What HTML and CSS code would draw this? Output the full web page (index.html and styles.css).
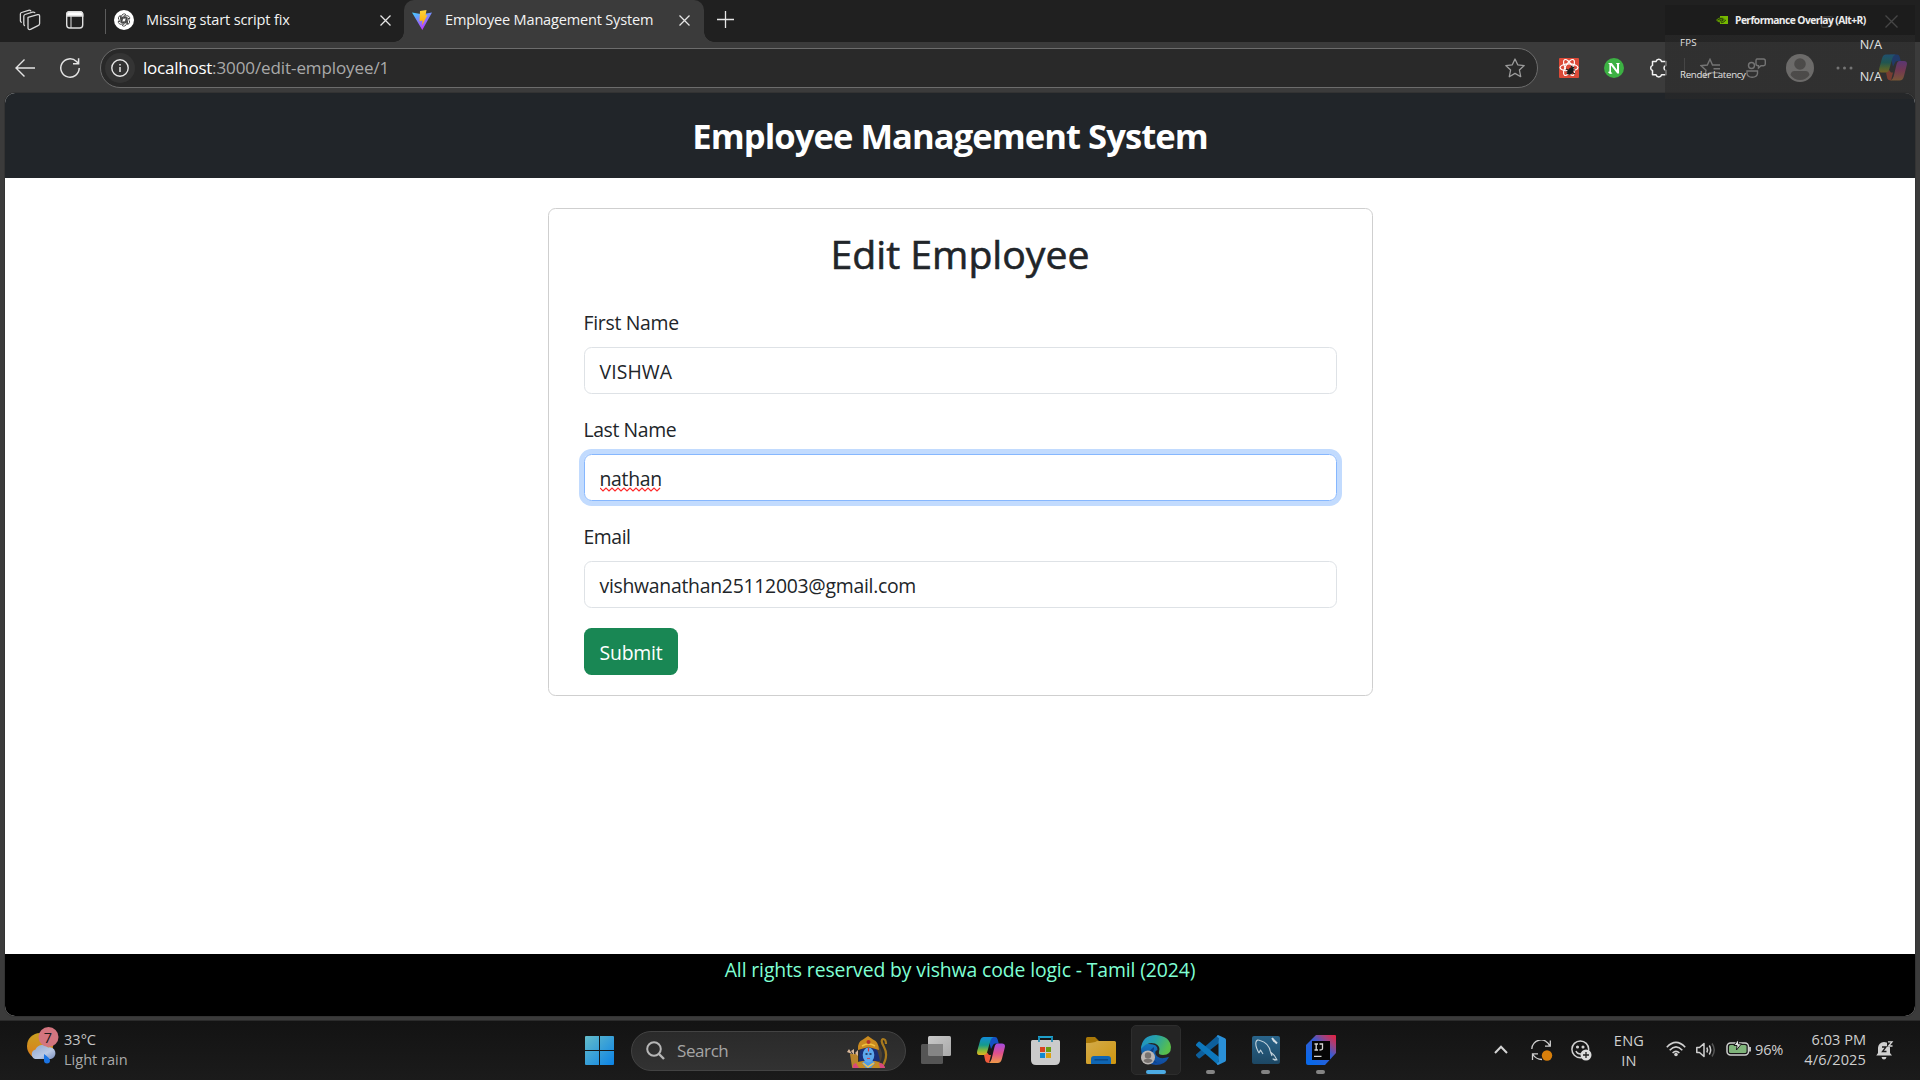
FILE: index.html
```html
<!DOCTYPE html>
<html lang="en">
<head>
<meta charset="utf-8">
<title>Employee Management System</title>
<link rel="stylesheet" href="styles.css">
</head>
<body>
<div class="screen">

  <div class="tabstrip">
    <svg class="ic workspaces" width="22" height="22" viewBox="0 0 22 22" fill="none" stroke="#d8d8d8" stroke-width="1.3" stroke-linejoin="round" stroke-linecap="round"><path d="M9 8.3 18.6 5.6Q20.6 5.200 20.600 7V14.500Q20.600 16 19 16.700L11.500 20.400Q9 21 9 18.800ZM5.500 16.500Q4.800 16 4.800 15V7.200Q4.800 6 6 5.500L13.500 3.200Q15 2.800 15.800 3.600M2.300 13.300Q1.400 12.800 1.400 11.700V5Q1.400 3.900 2.600 3.500L9.500 1.300Q11 .9 11.700 1.700"/></svg>
    <svg class="ic tabactions" width="20" height="20" viewBox="0 0 20 20" fill="none" stroke="#dedede" stroke-width="1.4"><rect x="1.700" y="1.700" width="16" height="16.300" rx="3"/><path d="M1.700 4.500Q1.700 1.700 4.500 1.700H15Q17.700 1.700 17.700 4.500V6H1.700Z" fill="#fff"/><path d="M6 6V18" stroke-width="1"/></svg>
    <div class="tab-divider"></div>
    <div class="tab tab-idle">
      <svg class="ic" width="20" height="20" viewBox="0 0 20 20"><circle cx="10" cy="10" r="10" fill="#fff"/><g fill="none" stroke="#333" stroke-width=".8"><g id="petals"><path d="M7.500 11.500V6.500A2.600 2.600 0 0 1 12 4.700L8.500 6.900V10"/><path d="M7.500 11.500V6.500A2.600 2.600 0 0 1 12 4.700L8.500 6.900V10" transform="rotate(60 10 10)"/><path d="M7.500 11.500V6.500A2.600 2.600 0 0 1 12 4.700L8.500 6.900V10" transform="rotate(120 10 10)"/></g><use href="#petals" transform="rotate(180 10 10)"/></g></svg>
      <span class="tab-title title-idle">Missing start script fix</span>
      <svg class="ic tab-close" width="11" height="11" viewBox="0 0 11 11" stroke="#e6e6e6" stroke-width="1.300"><path d="M.5.5 10.500 10.500M10.500.5.500 10.500"/></svg>
    </div>
    <div class="tab tab-active">
      <svg class="ic" width="20" height="20" viewBox="0 0 20 20"><defs><linearGradient id="va" x1="0" y1="0" x2="0.500" y2="1"><stop offset="0" stop-color="#41d1ff"/><stop offset="1" stop-color="#bd34fe"/></linearGradient><linearGradient id="vb" x1="0" y1="0" x2="0" y2="1"><stop offset="0" stop-color="#ffd43a"/><stop offset="1" stop-color="#ffa800"/></linearGradient></defs><path d="M0 2.500 10 4.200 20 2.500 10.300 20Z" fill="url(#va)"/><path d="M8 1 14.500 0 13.500 5.500 15.500 5 10 15.500 10.600 10.500 7.500 11.200Z" fill="url(#vb)"/></svg>
      <span class="tab-title title-active">Employee Management System</span>
      <svg class="ic tab-close" width="11" height="11" viewBox="0 0 11 11" stroke="#e6e6e6" stroke-width="1.300"><path d="M.5.5 10.500 10.500M10.500.5.500 10.500"/></svg>
    </div>
    <svg class="ic new-tab" width="17" height="17" viewBox="0 0 17 17" stroke="#e6e6e6" stroke-width="1.300"><path d="M0 8.500H17M8.500 0V17"/></svg>
    <div class="window-controls">
      <svg width="12" height="12" viewBox="0 0 12 12" fill="none" stroke="#bbb" stroke-width="1.200"><rect x=".6" y="2.600" width="8.800" height="8.800" rx="1.500"/><path d="M3 2V.6H10Q11.400.6 11.400 2V9"/></svg>
      <svg width="13" height="13" viewBox="0 0 13 13" stroke="#eee" stroke-width="1.300"><path d="M.5.5 12.500 12.500M12.500.5.5 12.500"/></svg>
    </div>
  </div>

  <div class="toolbar">
    <svg class="ic back" width="20" height="18" viewBox="0 0 20 18" fill="none" stroke="#e4e4e4" stroke-width="1.400"><path d="M20 9H1M9.500.5 1 9 9.500 17.500"/></svg>
    <svg class="ic reload" width="20" height="20" viewBox="0 0 20 20" fill="none" stroke="#e4e4e4" stroke-width="1.500"><path d="M19.200 10A9.200 9.200 0 1 1 16.500 3.500L18.500 5.500M18.600.3V5.800H13"/></svg>
    <div class="omnibox">
      <div class="site-info"><svg width="18" height="18" viewBox="0 0 18 18" fill="none" stroke="#e8e8e8" stroke-width="1.400"><circle cx="9" cy="9" r="8.200"/><path d="M9 8V13M9 5V6.600" stroke-width="1.500"/></svg></div>
      <span class="url"><span class="host">localhost</span>:3000/edit-employee/1</span>
      <svg class="star" width="20" height="20" viewBox="0 0 20 20" fill="none" stroke="#9b9b9b" stroke-width="1.300" stroke-linejoin="round"><path d="M10 1 12.700 6.800 19.200 7.600 14.400 12 15.700 18.700 10 15.400 4.300 18.700 5.600 12 .8 7.600 7.300 6.800Z"/></svg>
    </div>
    <div class="toolbar-icons">
      <svg class="ic i-react" width="20" height="20" viewBox="0 0 20 20"><rect width="20" height="20" rx="1" fill="#dc4a38"/><g fill="none" stroke="#fff" stroke-width="1.200"><ellipse cx="10" cy="9.500" rx="9" ry="3.600"/><ellipse cx="10" cy="9.500" rx="9" ry="3.600" transform="rotate(60 10 9.500)"/><ellipse cx="10" cy="9.500" rx="9" ry="3.600" transform="rotate(120 10 9.500)"/></g><ellipse cx="11.500" cy="13" rx="2.600" ry="4" fill="#1b1b1b" transform="rotate(30 11.500 13)"/><path d="M7 11 16 16M8 16 15 9M12 8 14.500 10M7.500 13.500 10 14M13 12 16 12" stroke="#1b1b1b" stroke-width="1.200"/></svg>
      <svg class="ic i-n" width="20" height="20" viewBox="0 0 20 20"><circle cx="10" cy="10" r="10" fill="#3cb143"/><path d="M4 5H7.800L13 12V6.200L11.800 5H16L15 6.200V15.500H13.300L7 7.500V14L8.500 15.500 6 16 3.800 14 5.400 13.500V6.200Z" fill="#fff"/></svg>
      <svg class="ic i-puzzle" width="20" height="20" viewBox="0 0 20 20" fill="none" stroke="#f2f2f2" stroke-width="1.500"><path d="M3.500 3.500H7A2.900 2.900 0 0 1 12.600 3.500H17V7.600A2.500 2.500 0 0 0 17 12.500V16.800H12.600A2.900 2.900 0 0 1 7 16.800H3.500V12.500A2.700 2.700 0 0 1 3.500 7.400Z" stroke-linejoin="round"/></svg>
      <div class="bar-divider"></div>
      <svg class="ic i-fav" width="21" height="20" viewBox="0 0 21 20" fill="none" stroke="#e4e4e4" stroke-width="1.400"><path d="M12.500 14.500 9.500 15 4.800 18.300 6 12.300 1 7.700 7.300 7 10 1.300 12.500 7H20M13.500 10.800H20M12.500 14.700H20" /></svg>
      <svg class="ic i-people" width="20" height="20" viewBox="0 0 20 20" fill="none" stroke="#e4e4e4" stroke-width="1.400"><circle cx="5.500" cy="7.500" r="3"/><path d="M1 13H11.500V15.500Q11 19.200 6.200 19.200 1.500 19.200 1 15.500ZM11 1H17.500Q19.300 1 19.300 3V6Q19.300 7.700 17.500 7.700H15L12.500 10V7.700Q10 7.700 10 6V3Q10 1 11 1Z"/></svg>
      <svg class="ic i-avatar" width="28" height="28" viewBox="0 0 28 28"><circle cx="14" cy="14" r="14" fill="#d0cdca"/><circle cx="14" cy="10" r="5.800" fill="#817d7a"/><path d="M4.500 21Q5 17 8.500 17H19.500Q23 17 23.500 21 20 26 14 26T4.500 21Z" fill="#817d7a"/></svg>
      <svg class="ic i-more" width="17" height="4" viewBox="0 0 17 4" fill="#e4e4e4"><circle cx="2" cy="2" r="1.500"/><circle cx="8.500" cy="2" r="1.500"/><circle cx="15" cy="2" r="1.500"/></svg>
      <svg class="ic i-copilot" width="28" height="27" viewBox="0 0 28 26"><use href="#copilot"/></svg>
    </div>
  </div>

  <div class="viewport">
    <header class="app-header"><h1>Employee Management System</h1></header>
    <main class="app-main">
      <section class="card">
        <h2>Edit Employee</h2>
        <form class="form">
          <div class="field">
            <label class="l-first">First Name</label>
            <div class="control v-first">VISHWA</div>
          </div>
          <div class="field">
            <label class="l-last">Last Name</label>
            <div class="control focused"><span class="misspelt">nathan<svg class="squiggle" width="61" height="5" viewBox="0 0 61 5" fill="none" stroke="#ff2a2a" stroke-width="1.200"><path d="M0 1 3 4 6 1 9 4 12 1 15 4 18 1 21 4 24 1 27 4 30 1 33 4 36 1 39 4 42 1 45 4 48 1 51 4 54 1 57 4 60 1"/></svg></span></div>
          </div>
          <div class="field">
            <label class="l-email">Email</label>
            <div class="control v-email">vishwanathan25112003@gmail.com</div>
          </div>
          <button type="button" class="submit">Submit</button>
        </form>
      </section>
    </main>
    <footer class="app-footer">All rights reserved by vishwa code logic - Tamil (2024)</footer>
  </div>

  <div class="taskbar">
    <div class="weather">
      <svg width="32" height="38" viewBox="0 0 32 38"><defs><linearGradient id="sun" x1="0" y1="0" x2="0" y2="1"><stop offset="0" stop-color="#c9a021"/><stop offset="1" stop-color="#dc7a1b"/></linearGradient><linearGradient id="cloud" x1="0" y1="0" x2="1" y2="1"><stop offset="0" stop-color="#8ea6cf"/><stop offset=".6" stop-color="#b9c8e4"/><stop offset="1" stop-color="#7b8fbd"/></linearGradient></defs><circle cx="13" cy="19" r="13" fill="url(#sun)"/><path d="M8 32A5 5 0 0 1 8.500 22.500 7.500 7.500 0 0 1 21 20.500 5.800 5.800 0 0 1 24 32Z" fill="url(#cloud)"/><path d="M17 27Q23 31 23 33.500A3 3 0 0 1 17 33.500Z" fill="#1b74e4"/><circle cx="21.500" cy="10" r="10" fill="#d3757f"/></svg>
      <span class="weather-badge">7</span>
      <div class="weather-text"><span class="temp">33°C</span><span class="cond">Light rain</span></div>
    </div>

    <div class="dock">
      <div class="slot"><svg width="29" height="29" viewBox="0 0 29 29"><defs><linearGradient id="win" x1="0" y1="0" x2="1" y2="1"><stop offset="0" stop-color="#64bcc9"/><stop offset="1" stop-color="#0b83e6"/></linearGradient></defs><path d="M1 0H14V14H0V1Q0 0 1 0ZM15 0H28Q29 0 29 1V14H15ZM0 15H14V29H1Q0 29 0 28ZM15 15H29V28Q29 29 28 29H15Z" fill="url(#win)"/></svg></div>
      <div class="search">
        <svg class="search-icon" width="19" height="19" viewBox="0 0 19 19" fill="none" stroke="#b6b6b6" stroke-width="2"><circle cx="8" cy="8" r="6.800"/><path d="M13 13 18 18" stroke-width="2.400"/></svg>
        <span class="search-text">Search</span>
        <svg class="deity" width="42" height="32" viewBox="0 0 42 32">
          <ellipse cx="25" cy="19" rx="11" ry="12" fill="#4d4133"/>
          <path d="M36 31Q43 20 38 11 34 4 37 3 40 3 40 8" fill="none" stroke="#a97a1d" stroke-width="2.200"/>
          <path d="M4 18 12 18 12 31 6 31Z" fill="#b8842c"/><path d="M1 16 3 13 6 18ZM5 15 8 13 8 19ZM9 17 12 14 12 20Z" fill="#d8b79a"/>
          <path d="M13 25Q13 14 16 12H30Q32 15 34 25Z" fill="#1a2e78"/>
          <path d="M6 32Q7 26 17 25L29 25Q38 27 39 32Z" fill="#c58b24"/>
          <path d="M7 32Q6 28 10 27L13 32ZM34 32 33 27Q38 27 39 32Z" fill="#d8487b"/>
          <path d="M16 27 20 24 26 24 29 27 25 32 20 32Z" fill="#4b9be6"/>
          <ellipse cx="22.500" cy="19" rx="5.800" ry="7.500" fill="#5ea8ee"/>
          <path d="M12 14Q11 6 17 3.500L22 0 27 3.500Q33 6 33 14L22.500 11Z" fill="#c98a20"/>
          <path d="M16 10Q22.500 6 29 10" fill="none" stroke="#f0c040" stroke-width="1.500"/><circle cx="22.500" cy="6" r="2" fill="#b4312c"/>
          <path d="M19.500 18H21.500M23.500 18H25.500" stroke="#14244c" stroke-width="1.300"/><path d="M22.500 12V15.500" stroke="#d6323e" stroke-width="1.200"/><path d="M21 22.500H24" stroke="#c8485c" stroke-width="1.200"/>
          <path d="M17 27 22 31 28 27" fill="none" stroke="#edbf55" stroke-width="1.600"/>
        </svg>
      </div>
      <div class="slot"><svg width="30" height="28" viewBox="0 0 30 28"><defs><linearGradient id="tv" x1="0" y1="0" x2="1" y2="1"><stop offset="0" stop-color="#c9c9c9"/><stop offset="1" stop-color="#a9a9a9"/></linearGradient></defs><rect x="7" y="0" width="23" height="20" rx="1.500" fill="url(#tv)"/><rect x="0" y="8" width="22" height="20" rx="1.500" fill="#555"/><path d="M7 8H22V20H8.500Q7 20 7 18.500Z" fill="#858585"/></svg></div>
      <div class="slot"><svg width="28" height="26" viewBox="0 0 28 26"><defs>
        <linearGradient id="cpa" x1="0" y1="0" x2="0" y2="1"><stop offset="0" stop-color="#128bd8"/><stop offset=".45" stop-color="#159a8c"/><stop offset=".75" stop-color="#86b83a"/><stop offset="1" stop-color="#e5b41e"/></linearGradient>
        <linearGradient id="cpb" x1="0" y1="0" x2="0" y2="1"><stop offset="0" stop-color="#a44be0"/><stop offset=".5" stop-color="#e0508c"/><stop offset="1" stop-color="#ef9a48"/></linearGradient>
        <g id="copilot"><path d="M11 0H18Q20 0 20.500 2L21.800 6.500H18.500Q16.500 6.500 15.800 8.500L14 12Z" fill="#1452c4"/><path d="M7 18Q9 17.500 9.700 15L12 18 14 18 12 26Q9 26 8.300 24Z" fill="#ef5a3c"/><path d="M7 0H16.500Q14 1 13.300 4L10.200 15Q9.400 18 7 18H3Q-.7 18 .2 14L3 4Q4 0 7 0Z" fill="url(#cpa)"/><path d="M20.500 6.500H25Q28.700 6.500 27.800 10.500L25 21.500Q24 26 20.500 26H11.500Q13.800 25 14.600 22L17.500 10Q18.300 6.500 20.500 6.500Z" fill="url(#cpb)"/></g></defs><use href="#copilot"/></svg></div>
      <div class="slot"><svg width="29" height="29" viewBox="0 0 29 29"><path d="M8 5V1H21V5" fill="none" stroke="#1e9fc9" stroke-width="2"/><path d="M0 5.500Q0 4 1.500 4H27.500Q29 4 29 5.500V24Q29 29 24 29H5Q0 29 0 24Z" fill="#cbcbcb"/><path d="M8 1V6M21 1V6" stroke="#1585b0" stroke-width="1.600"/><path d="M9 11H14V16H9Z" fill="#d9431f"/><path d="M15 11H20V16H15Z" fill="#6c9d12"/><path d="M9 17H14V22H9Z" fill="#1288cf"/><path d="M15 17H20V22H15Z" fill="#dca112"/></svg></div>
      <div class="slot"><svg width="30" height="27" viewBox="0 0 30 27"><defs><linearGradient id="fo" x1="0" y1="0" x2="1" y2="1"><stop offset="0" stop-color="#d3ab4b"/><stop offset="1" stop-color="#cf960f"/></linearGradient></defs><path d="M0 1.500Q0 0 1.500 0H9L13 4H20V10H0Z" fill="#a97808"/><path d="M0 6Q8 6 11 4H28.500Q30 4 30 5.500V26Q30 27 28.500 27H1.500Q0 27 0 25.500Z" fill="url(#fo)"/><path d="M5 27V22Q5 19 8 19H22Q25 19 25 22V27Z" fill="#0f66b4"/><path d="M8.500 22.800H22" stroke="#0a4580" stroke-width="1.300"/></svg></div>
      <div class="slot app active">
        <svg width="30" height="30" viewBox="0 0 30 30"><defs><linearGradient id="ea" x1="0" y1="0" x2="1" y2=".4"><stop offset="0" stop-color="#1f8fd0"/><stop offset=".5" stop-color="#27a3a6"/><stop offset="1" stop-color="#58bf4c"/></linearGradient><linearGradient id="eb" x1="0" y1="0" x2="0" y2="1"><stop offset="0" stop-color="#1478bd"/><stop offset="1" stop-color="#10489d"/></linearGradient></defs><path d="M0 14Q1 5 8 9 17 9 16.500 15 13 16 15 20 18 25 28 22 24 30 15 30 1 29 0 14Z" fill="url(#eb)"/><path d="M0 14Q1 0 15 0 29 1 30 12 30 20 22 20 17 20 18 17 20 11 14 8.500 6 6 0 14Z" fill="url(#ea)"/><path d="M13 14Q8 22 16 28 9 27 8 20 8 15 13 12Z" fill="#0c3f85"/><circle cx="7" cy="22.500" r="7" fill="#bbb7b4"/><circle cx="7" cy="20.500" r="3.200" fill="#77726f"/><path d="M2.500 26Q3 24 5 24H9Q11 24 11.500 26 9.500 28 7 28T2.500 26Z" fill="#77726f"/></svg>
        <i class="indicator"></i>
      </div>
      <div class="slot app"><svg width="30" height="30" viewBox="0 0 30 30"><path d="M0 19.500 22 0 23 8 3.500 23.500 2.500 23.200.3 21Q-.3 20.200 0 19.500Z" fill="#0d5f9c"/><path d="M0 10.500Q-.3 9.800.3 9L2.500 6.800 3.500 6.500 23 22 22 30Z" fill="#0d77bc"/><path d="M22 0 29 3.200Q30 3.700 30 5V25Q30 26.300 29 26.800L22 30Q20.800 29.500 20.800 28.500L22.500 27V3L20.800 1.500Q20.800.5 22 0Z" fill="#2a90d8"/></svg><i class="indicator"></i></div>
      <div class="slot app"><svg width="28" height="28" viewBox="0 0 28 28"><defs><linearGradient id="my" x1="0" y1="0" x2="0" y2="1"><stop offset="0" stop-color="#29648a"/><stop offset="1" stop-color="#1d4763"/></linearGradient></defs><rect width="28" height="28" rx="2" fill="url(#my)"/><path d="M7 17Q3 10 4 6 5 3 8 4.500 17 7 18.500 16 23 19 25 24L21 23 23.500 24.500M7 17 8.500 14 11 18M18.500 16 20 20" fill="none" stroke="#c2d2dc" stroke-width="1.100" stroke-linejoin="round"/><path d="M20 2 22 4.500 21 5M20.500 3 25 7.500" stroke="#d3dde4" stroke-width="2" fill="none"/></svg><i class="indicator"></i></div>
      <div class="slot app"><svg width="30" height="30" viewBox="0 0 30 30"><defs><linearGradient id="ij" x1="1" y1="0" x2="0.200" y2=".9"><stop offset="0" stop-color="#ea1f3c"/><stop offset=".25" stop-color="#a3407c"/><stop offset=".5" stop-color="#3a5bd0"/><stop offset="1" stop-color="#0a68e8"/></linearGradient></defs><path d="M10 0H29Q30 0 30 1V18L19 30H2Q0 30 0 28V10Z" fill="url(#ij)"/><rect x="6" y="6" width="18" height="19" fill="#050505"/><path d="M8.500 9H12M10.200 9V15M8.500 15H12M13.500 9H16.500V13.500Q16.500 15 13.500 15M8 21.300H15.500" fill="none" stroke="#d5d5d5" stroke-width="1.300"/></svg><i class="indicator"></i></div>
    </div>

    <div class="tray">
      <svg class="ic t-up" width="14" height="9" viewBox="0 0 14 9" fill="none" stroke="#d4d4d4" stroke-width="2"><path d="M1 8 7 1.700 13 8"/></svg>
      <svg class="ic t-sync" width="22" height="21" viewBox="0 0 22 21" fill="none" stroke="#cfcfcf" stroke-width="1.300"><path d="M.8 9A9.300 9.300 0 0 1 18.800 6M19.300.5V6.200H14M11 19.500Q5 19.500 1.500 14M1.500 20V13.800H7"/><circle cx="16" cy="15.500" r="5.200" fill="#d87f0b" stroke="none"/></svg>
      <svg class="ic t-emoji" width="21" height="21" viewBox="0 0 21 21" fill="none" stroke="#d0d0d0" stroke-width="1.500"><circle cx="9.300" cy="9.300" r="8.400"/><path d="M5 11Q6 14 10 14"/><circle cx="6.500" cy="7" r=".8" fill="#d0d0d0"/><circle cx="12" cy="7" r=".8" fill="#d0d0d0"/><circle cx="15" cy="15" r="5.500" fill="#dcdcdc" stroke="none"/><path d="M15 12V18M12 15H18" stroke="#222" stroke-width="1.300"/></svg>
      <div class="lang"><span>ENG</span><span class="in">IN</span></div>
      <svg class="ic t-wifi" width="20" height="16" viewBox="0 0 20 16" fill="none" stroke="#d0d0d0" stroke-width="1.600"><path d="M.8 6.200Q10-3.500 19.200 6.200M3.700 9.200Q10 2.500 16.300 9.200M6.600 12Q10 8.600 13.400 12"/><circle cx="10" cy="13.500" r="1.800" fill="#d0d0d0" stroke="none"/></svg>
      <svg class="ic t-vol" width="20" height="16" viewBox="0 0 20 16" fill="none" stroke="#d0d0d0" stroke-width="1.500" stroke-linejoin="round"><path d="M.8 5.500H3.500L8 1.500V14.500L3.500 10.500H.8ZM10.800 5.500Q12.300 8 10.800 10.500M13.300 3.500Q16 8 13.300 12.500"/><path d="M16 1.500Q20.500 8 16 14.500" stroke="#555"/></svg>
      <svg class="ic t-bat" width="26" height="17" viewBox="0 0 26 17"><rect x="1" y="4" width="21.500" height="12" rx="3.500" fill="none" stroke="#cfcfcf" stroke-width="1.500"/><rect x="3" y="6" width="17.500" height="8" rx="1.500" fill="#7fb37a"/><path d="M24 8V12.500" stroke="#cfcfcf" stroke-width="1.800"/><path d="M12.500 0 8 6.500H11L10.500 11 15.500 4.800H12.500Z" fill="#e4e4e4" stroke="#1a1a1a" stroke-width="1"/></svg>
      <span class="bat">96%</span>
      <div class="clock"><span class="time">6:03 PM</span><span class="date">4/6/2025</span></div>
      <svg class="ic t-bell" width="18" height="19" viewBox="0 0 18 19"><path d="M2 12V7A6 6 0 0 1 8 1Q14 1 14 7V12L16 14.500H.3ZM5.500 16H10.500Q10 18.500 8 18.500T5.500 16Z" fill="#d0d0d0"/><path d="M11 0H17V6H11Z" fill="#1a1a1a"/><path d="M12 .8H16L12.500 5H16.500" fill="none" stroke="#d8d8d8" stroke-width="1.300"/><path d="M6 6H10L6.500 10.500H10.500" fill="none" stroke="#1a1a1a" stroke-width="1.300"/></svg>
    </div>
  </div>

  <div class="overlay">
    <div class="overlay-head">
      <svg width="12" height="8" viewBox="0 0 12 8"><path d="M4 0H12V8H4Z" fill="#76b900"/><path d="M0 4Q3 .5 7 1.500 9.500 3 10 4 8 6.800 5 6.800 2 6.800 0 4Z" fill="#5d9300"/><path d="M1.500 4Q4 1.500 7 3 7.500 4.500 5.500 5 4 5 4 3.500" fill="none" stroke="#1c2a08" stroke-width=".8"/><path d="M10 4Q8 6.800 5 6.800" stroke="#1c2a08" stroke-width=".7" fill="none"/></svg>
      <span class="overlay-title">Performance Overlay (Alt+R)</span>
    </div>
    <div class="overlay-row row-fps"><span class="fps">FPS</span><span class="na">N/A</span></div>
    <div class="overlay-row row-lat"><span class="lat">Render Latency</span><span class="na">N/A</span></div>
  </div>
</div>
</body>
</html>
```
FILE: styles.css
```css
* { box-sizing: border-box; }

body {
  margin: 0;
  font-family: "Open Sans", "Noto Sans", sans-serif;
  background: #3b3b3b;
}

.screen {
  position: relative;
  width: 1920px;
  height: 1080px;
  overflow: hidden;
  display: flex;
  flex-direction: column;
  background: #3b3b3b;
}

svg { display: block; }
.ic { flex: none; }
span { white-space: nowrap; }

/* Tab strip */
.tabstrip {
  height: 42px;
  flex: none;
  display: flex;
  align-items: flex-start;
  background: #202020;
}
.workspaces { margin: 9px 0 0 19px; }
.tabactions { margin: 10px 0 0 24px; }
.tab-divider { width: 1px; height: 25px; margin: 9px 0 0 20px; background: #5c5c5c; }
.tab { display: flex; align-items: center; height: 42px; padding-bottom: 2px; }
.tab-idle { width: 298px; padding-left: 8px; }
.tab-active {
  position: relative;
  width: 300px;
  padding-left: 8px;
  background: #3b3b3b;
  border-radius: 10px 10px 0 0;
}
.tab-active::before,
.tab-active::after {
  content: "";
  position: absolute;
  bottom: 0;
  width: 10px;
  height: 10px;
}
.tab-active::before { left: -10px; background: radial-gradient(circle at 0 0, transparent 9.5px, #3b3b3b 10px); }
.tab-active::after { right: -10px; background: radial-gradient(circle at 100% 0, transparent 9.5px, #3b3b3b 10px); }
.tab-title { color: #f4f4f4; font-size: 14.55px; line-height: 20px; margin-top: -3px; }
.title-idle { margin-left: 12px; letter-spacing: -0.164px; }
.title-active { margin-left: 13px; letter-spacing: -0.187px; }
.tab-close { margin: 1px 0 0 auto; }
.tab-idle .tab-close { margin-right: 13px; }
.tab-active .tab-close { margin-right: 14px; }
.new-tab { margin: 11px 0 0 13px; }
.window-controls { display: flex; align-items: center; gap: 52px; margin: 15px 22px 0 auto; }

/* Address bar */
.toolbar { height: 51px; flex: none; display: flex; align-items: center; }
.back { margin-left: 15px; }
.reload { margin-left: 25px; }
.omnibox {
  width: 1438px;
  height: 40px;
  margin: 0 0 0 20px;
  padding: 0 12px 0 4px;
  display: flex;
  align-items: center;
  border: 1px solid #6c6c6c;
  border-radius: 20px;
  background: #292929;
}
.site-info {
  width: 30px;
  height: 30px;
  display: grid;
  place-items: center;
  border-radius: 50%;
  background: #343434;
}
.url { margin-left: 8px; margin-top: -1px; font-size: 17px; letter-spacing: -0.095px; color: #a9a9a9; }
.host { color: #fff; letter-spacing: -0.238px; }
.star { margin-left: auto; }
.toolbar-icons { display: flex; align-items: center; height: 51px; }
.i-react { margin-left: 21px; }
.i-n { margin-left: 25px; }
.i-puzzle { margin-left: 25px; }
.bar-divider { width: 1px; height: 20px; margin-left: 15px; background: #707070; }
.i-fav { margin-left: 15px; }
.i-people { margin-left: 25px; }
.i-avatar { margin-left: 20px; }
.i-more { margin-left: 22px; }
.i-copilot { margin-left: 26px; }

/* Page */
.viewport {
  height: 923px;
  flex: none;
  margin: 0 5px;
  display: flex;
  flex-direction: column;
  overflow: hidden;
  border-radius: 10px;
  background: #fff;
  box-shadow: 0 0 0 1px #333;
}
.app-header { height: 85px; flex: none; padding-right: 20px; background: #212529; text-align: center; }
.app-header h1 {
  margin: 0;
  padding-top: 20px;
  color: #fff;
  font-size: 34.6px;
  font-weight: 700;
  line-height: 45px;
  letter-spacing: -0.95px;
}
.app-main { flex: 1; padding-top: 30px; color: #212529; }
.card {
  width: 825px;
  height: 488px;
  margin: 0 auto;
  padding: 21px 35px;
  border: 1px solid #cfcfcf;
  border-radius: 7.5px;
}
.card h2 {
  margin: 0 0 29px;
  font-size: 39.2px;
  font-weight: 500;
  line-height: 48px;
  text-align: center;
  -webkit-text-stroke: 0.6px #212529;
}
.form { display: flex; flex-direction: column; gap: 20px; align-items: stretch; }
.field { display: flex; flex-direction: column; gap: 9px; }
.field label { height: 31px; font-size: 19.4px; line-height: 31px; }
.l-first { letter-spacing: -0.287px; }
.l-last { letter-spacing: -0.394px; }
.l-email { letter-spacing: -0.457px; }
.control {
  height: 47px;
  padding: 1px 15px 0;
  border: 1px solid #dee2e6;
  border-radius: 7.5px;
  font-size: 19.4px;
  line-height: 45px;
}
.v-first { letter-spacing: 0.11px; }
.v-email { letter-spacing: -0.275px; }
.focused { letter-spacing: -0.294px; border-color: #86b7fe; box-shadow: 0 0 0 5px #c2dbfe; }
.misspelt { position: relative; display: inline-block; }
.squiggle { position: absolute; left: 0; top: 31px; }
.submit {
  align-self: flex-start;
  width: 94px;
  height: 47px;
  padding: 1px 0 0 1px;
  border: 0;
  border-radius: 7.5px;
  background: #198754;
  color: #fff;
  font-family: inherit;
  font-size: 19.4px;
  letter-spacing: -0.216px;
}
.app-footer {
  height: 62px;
  flex: none;
  background: #000;
  color: #7fffd4;
  font-size: 19.4px;
  line-height: 31px;
  letter-spacing: -0.124px;
  text-align: center;
}

/* Taskbar */
.taskbar {
  height: 60px;
  flex: none;
  margin-top: 4px;
  display: flex;
  border-top: 1px solid #2b2b2b;
  background: linear-gradient(#131313, #1b1b1b);
  color: #c6c6c6;
  font-size: 14.55px;
}
.weather { position: relative; width: 572px; display: flex; padding: 6px 0 0 27px; }
.weather-badge {
  position: absolute;
  left: 38px;
  top: 7px;
  width: 20px;
  text-align: center;
  color: #1c1c1c;
  font-size: 14.5px;
  line-height: 20px;
}
.weather-text { display: flex; flex-direction: column; margin: 2px 0 0 5px; line-height: 20px; }
.cond { color: #a9a9a9; }
.dock { display: flex; align-items: center; }
.slot { position: relative; width: 55px; height: 59px; display: grid; place-items: center; }
.search {
  width: 275px;
  height: 40px;
  margin: 0 2px 0 4px;
  padding: 0 17px 0 14px;
  display: flex;
  align-items: center;
  border: 1px solid #434343;
  border-radius: 20px;
  background: linear-gradient(#2a2a2a, #323232);
}
.search-text { margin-left: 12px; color: #a5a5a5; font-size: 17px; letter-spacing: -0.408px; }
.search-icon { flex: none; }
.deity { flex: none; margin: 2px 0 0 auto; }
.active::before {
  content: "";
  position: absolute;
  inset: 4px 2px 5px 3px;
  border: 1px solid #2d2d2d;
  border-radius: 5px;
  background: #242424;
}
.active svg { position: relative; }
.slot svg { margin-bottom: 1px; }
.indicator {
  position: absolute;
  bottom: 6px;
  left: 23px;
  width: 9px;
  height: 4px;
  border-radius: 2px;
  background: #848484;
}
.active .indicator { left: 18px; width: 20px; background: #4cabe4; }
.tray { display: flex; align-items: flex-start; flex: 1; color: #cfcfcf; }
.t-up { margin: 24px 0 0 146px; }
.t-sync { margin: 19px 0 0 23px; }
.t-emoji { margin: 19px 0 0 18px; }
.lang { width: 44px; margin: 9px 0 0 15px; display: flex; flex-direction: column; align-items: center; line-height: 20px; letter-spacing: 0.265px; }
.t-wifi { margin: 20px 0 0 15px; }
.t-vol { margin: 21px 0 0 10px; }
.t-bat { margin: 18px 0 0 10px; }
.bat { width: 30px; margin: 18px 0 0 3px; line-height: 20px; letter-spacing: -0.139px; }
.clock { width: 81px; margin: 8px 0 0 0; display: flex; flex-direction: column; align-items: flex-end; line-height: 20px; }
.date { letter-spacing: 0.139px; }
.t-bell { margin: 20px 0 0 10px; }

/* Performance overlay floating above the browser chrome */
.overlay { position: absolute; left: 1665px; top: 5px; width: 250px; height: 94px; background: linear-gradient(transparent 30px, rgba(41, 41, 41, 0.6) 30px); color: #e2e2e2; }
.overlay-head { height: 30px; display: flex; align-items: center; padding-left: 51px; background: rgba(28, 28, 28, 0.8); }
.overlay-title { margin-left: 7px; color: #ececec; font-size: 10.3px; font-weight: 700; line-height: 20px; letter-spacing: -0.59px; }
.overlay-row { display: flex; justify-content: space-between; align-items: flex-start; padding: 0 33px 0 15px; height: 32px; line-height: 16px; }
.fps { font-size: 9.7px; letter-spacing: 0.154px; }
.lat { font-size: 9.7px; letter-spacing: -0.309px; }
.na { margin-top: 1px; font-size: 12.7px; font-weight: 500; }
```
